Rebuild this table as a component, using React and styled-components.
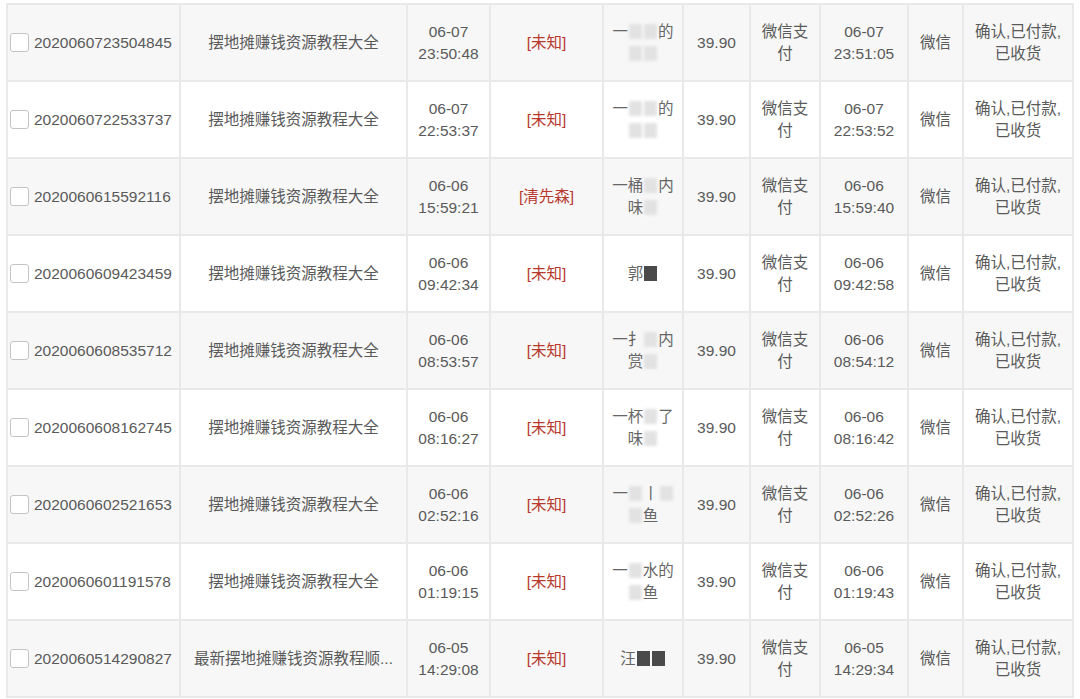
import React from "react"
import styled, { createGlobalStyle } from "styled-components"

const GlobalStyle = createGlobalStyle`
  html, body {
    margin: 0;
    padding: 0;
    background: #ffffff;
  }
  body {
    font-family: "Liberation Sans", "Noto Sans CJK SC", sans-serif;
    color: #555555;
  }
`

const L = { blur: "light" }
const D = { blur: "dark" }

const orders = [
  {
    no: "2020060723504845",
    title: "摆地摊赚钱资源教程大全",
    created: ["06-07", "23:50:48"],
    tag: "[未知]",
    buyer: [["一", L, L, "的"], [L, L]],
    paid: ["06-07", "23:51:05"],
  },
  {
    no: "2020060722533737",
    title: "摆地摊赚钱资源教程大全",
    created: ["06-07", "22:53:37"],
    tag: "[未知]",
    buyer: [["一", L, L, "的"], [L, L]],
    paid: ["06-07", "22:53:52"],
  },
  {
    no: "2020060615592116",
    title: "摆地摊赚钱资源教程大全",
    created: ["06-06", "15:59:21"],
    tag: "[清先森]",
    buyer: [["一", "桶", L, "内"], ["味", L]],
    paid: ["06-06", "15:59:40"],
  },
  {
    no: "2020060609423459",
    title: "摆地摊赚钱资源教程大全",
    created: ["06-06", "09:42:34"],
    tag: "[未知]",
    buyer: [["郭", D]],
    paid: ["06-06", "09:42:58"],
  },
  {
    no: "2020060608535712",
    title: "摆地摊赚钱资源教程大全",
    created: ["06-06", "08:53:57"],
    tag: "[未知]",
    buyer: [["一", "扌", L, "内"], ["赏", L]],
    paid: ["06-06", "08:54:12"],
  },
  {
    no: "2020060608162745",
    title: "摆地摊赚钱资源教程大全",
    created: ["06-06", "08:16:27"],
    tag: "[未知]",
    buyer: [["一", "杯", L, "了"], ["味", L]],
    paid: ["06-06", "08:16:42"],
  },
  {
    no: "2020060602521653",
    title: "摆地摊赚钱资源教程大全",
    created: ["06-06", "02:52:16"],
    tag: "[未知]",
    buyer: [["一", L, "丨", L], [L, "鱼"]],
    paid: ["06-06", "02:52:26"],
  },
  {
    no: "2020060601191578",
    title: "摆地摊赚钱资源教程大全",
    created: ["06-06", "01:19:15"],
    tag: "[未知]",
    buyer: [["一", L, "水", "的"], [L, "鱼"]],
    paid: ["06-06", "01:19:43"],
  },
  {
    no: "2020060514290827",
    // shown already shortened, as the list does
    title: "最新摆地摊赚钱资源教程顺...",
    created: ["06-05", "14:29:08"],
    tag: "[未知]",
    buyer: [["汪", D, D]],
    paid: ["06-05", "14:29:34"],
  },
]

const widths = [173, 227, 83, 113, 80, 67, 70, 88, 55, 110]

const Lines = ({ lines }) =>
  lines.map((line, i) => <Line key={i}>{line}</Line>)

const Buyer = ({ lines }) =>
  lines.map((line, i) => (
    <Line key={i}>
      {line.map((token, j) =>
        typeof token === "string" ? (
          <Glyph key={j}>{token}</Glyph>
        ) : (
          <Mosaic key={j} $dark={token.blur === "dark"} />
        )
      )}
    </Line>
  ))

export default function App() {
  return (
    <>
      <GlobalStyle />
      <Page>
        <Table>
          <colgroup>
            {widths.map((w, i) => (
              <col key={i} style={{ width: w }} />
            ))}
          </colgroup>
          <tbody>
            {orders.map((o, i) => (
              <Row key={o.no} $striped={i % 2 === 0}>
                <NoCell>
                  <NoWrap>
                    <Check />
                    <span>{o.no}</span>
                  </NoWrap>
                </NoCell>
                <TitleCell>{o.title}</TitleCell>
                <Cell>
                  <Lines lines={o.created} />
                </Cell>
                <Cell>
                  <Tag>{o.tag}</Tag>
                </Cell>
                <Cell>
                  <Buyer lines={o.buyer} />
                </Cell>
                <Cell>39.90</Cell>
                <Cell>
                  <Lines lines={["微信支", "付"]} />
                </Cell>
                <Cell>
                  <Lines lines={o.paid} />
                </Cell>
                <Cell>微信</Cell>
                <Cell>
                  <Lines lines={["确认,已付款,", "已收货"]} />
                </Cell>
              </Row>
            ))}
          </tbody>
        </Table>
      </Page>
    </>
  )
}

const Page = styled.div`
  padding: 3px 0 0 6px;
`

const Table = styled.table`
  table-layout: fixed;
  width: 1068px;
  border-collapse: collapse;
  font-size: 15.5px;
`

const Row = styled.tr`
  height: 77px;
  background: ${(p) => (p.$striped ? "#f7f7f7" : "#ffffff")};
`

const Cell = styled.td`
  border: 2px solid #e9e9e9;
  padding: 0 4px;
  text-align: center;
  vertical-align: middle;
  line-height: 22px;
  color: #5a5a5a;
`

const NoCell = styled(Cell)`
  text-align: left;
  padding: 0 2px;
`

const NoWrap = styled.div`
  display: flex;
  align-items: center;
  gap: 5px;
`

const TitleCell = styled(Cell)`
  white-space: nowrap;
  padding: 0 6px;
`

const Check = styled.span`
  flex: none;
  width: 17px;
  height: 17px;
  border: 1px solid #c4c4c4;
  border-radius: 3px;
  background: #ffffff;
`

const Line = styled.div`
  white-space: nowrap;
`

const Tag = styled.span`
  color: #b8392e;
`

const Glyph = styled.span`
  display: inline-block;
  width: 15.5px;
  color: #666666;
`

const Mosaic = styled.span`
  display: inline-block;
  width: 13px;
  height: 15px;
  margin: 0 1px;
  vertical-align: -2px;
  background: ${(p) => (p.$dark ? "#4a4a4a" : "#e2e2e2")};
  filter: blur(${(p) => (p.$dark ? "0.5px" : "1.5px")});
`
